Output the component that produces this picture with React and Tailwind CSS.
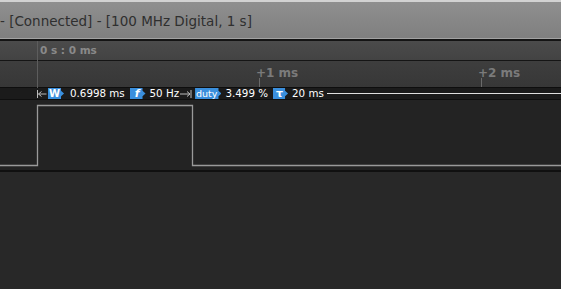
import React from "react";

const Badge = ({ children, cls }) => (
  <span
    className={`flex h-[11px] items-center bg-[#3a8fdd] pr-[4px] leading-none text-white [clip-path:polygon(0_0,calc(100%-3px)_0,calc(100%-3px)_25%,100%_50%,calc(100%-3px)_75%,calc(100%-3px)_100%,0_100%)] ${cls}`}
  >
    {children}
  </span>
);

const RulerLabel = ({ x, label }) => (
  <div className="absolute top-0 h-full" style={{ left: x }}>
    <span className="absolute left-[-3px] top-[3px] whitespace-nowrap text-[12px] font-bold text-[#7b7b7b]">
      {label}
    </span>
    <div className="absolute bottom-0 left-0 h-[9px] w-px bg-[#6a6a6a]" />
  </div>
);

export default function App() {
  return (
    <div className="flex h-[289px] w-[561px] flex-col overflow-hidden bg-[#282828] font-['DejaVu_Sans',sans-serif]">
      {/* title bar */}
      <div className="flex h-[41px] shrink-0 flex-col border-t-2 border-[#d2d2d2] bg-gradient-to-b from-[#8f8f8f] to-[#7e7e7e]">
        <div className="flex h-[36px] items-center pt-[2px] text-[13.5px] text-[#2f2f2f]">
          - [Connected] - [100 MHz Digital, 1 s]
        </div>
        <div className="h-px bg-[#a2a2a2]" />
        <div className="h-[2px] bg-[#141414]" />
      </div>

      {/* ruler */}
      <div className="relative flex shrink-0 flex-col">
        <div className="flex h-[19px] items-center bg-gradient-to-b from-[#4b4b4b] to-[#434343] pl-[40px] text-[10.5px] font-bold text-[#8a8a8a]">
          0 s : 0 ms
        </div>
        <div className="h-px bg-[#151515]" />
        <div className="relative h-[26px] bg-gradient-to-b from-[#3e3e3e] to-[#373737]">
          <RulerLabel x={259} label="+1 ms" />
          <RulerLabel x={481} label="+2 ms" />
        </div>
        <div className="h-px bg-[#0e0e0e]" />
        <div className="absolute left-[37px] top-0 h-full w-px bg-[#5d5d5d]" />
      </div>

      {/* measurement bar */}
      <div className="flex h-[11px] shrink-0 items-center bg-[#1b1b1b] pl-[37px] text-[10.3px] leading-none text-white">
        <svg width="10" height="8" viewBox="0 0 10 8" className="mr-[1px]">
          <path d="M0.5 0v8M1.5 4h8M1.5 4l3-2.5M1.5 4l3 2.5" stroke="#bdbdbd" strokeWidth="1" fill="none" />
        </svg>
        <Badge cls="pl-[1px] text-[10px] font-bold">W</Badge>
        <span className="ml-[6px]">0.6998 ms</span>
        <span className="ml-[5px]">
          <Badge cls="pl-[5px] pr-[6px] text-[11px] font-bold italic">f</Badge>
        </span>
        <span className="ml-[4px]">50 Hz</span>
        <svg width="12" height="8" viewBox="0 0 12 8" className="ml-[1px]">
          <path d="M11 0v8M0 4h10M10 4l-3-2.5M10 4l-3 2.5" stroke="#bdbdbd" strokeWidth="1" fill="none" />
        </svg>
        <span className="ml-[3px]">
          <Badge cls="pl-[1px] pr-[3px] text-[9.5px]">duty</Badge>
        </span>
        <span className="ml-[4px]">3.499 %</span>
        <span className="ml-[5px]">
          <Badge cls="pl-[3px] pr-[5px] text-[11px] font-bold">τ</Badge>
        </span>
        <span className="ml-[4px]">20 ms</span>
        <div className="ml-[3px] h-px flex-1 bg-[#e0e0e0]" />
      </div>
      <div className="h-px shrink-0 bg-[#0f0f0f]" />

      {/* waveform channel */}
      <div className="h-[70px] shrink-0 bg-[#232323]">
        <svg width="561" height="70" viewBox="0 0 561 70" className="block">
          <path
            d="M0 65.5H37.5V5.5H192.5V65.5H561"
            stroke="#9a9a9a"
            strokeWidth="1.3"
            fill="none"
          />
        </svg>
      </div>
      <div className="h-[2px] shrink-0 bg-[#101010]" />
      <div className="flex-1 bg-[#282828]" />
    </div>
  );
}
